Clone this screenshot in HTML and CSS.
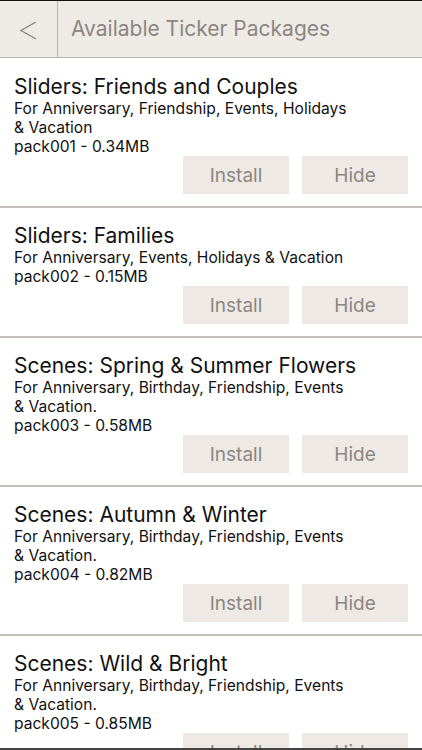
FILE: index.html
```html
<!DOCTYPE html>
<html>
<head>
<meta charset="utf-8">
<link rel="stylesheet" href="styles.css">
</head>
<body>
<div class="screen">
  <header class="nav">
    <div class="back">
      <svg width="20" height="22" viewBox="0 0 20 22"><polyline points="17,2 2,10.5 17,19" fill="none" stroke="#8b8681" stroke-width="1.4"/></svg>
    </div>
    <div class="nav-title">Available Ticker Packages</div>
  </header>
  <main class="list">
    <section class="item">
      <h2 class="title">Sliders: Friends and Couples</h2>
      <p class="desc">For Anniversary, Friendship, Events, Holidays<br>&amp; Vacation</p>
      <p class="desc">pack001 - 0.34MB</p>
      <div class="actions"><button class="btn">Install</button><button class="btn">Hide</button></div>
    </section>
    <section class="item">
      <h2 class="title">Sliders: Families</h2>
      <p class="desc">For Anniversary, Events, Holidays &amp; Vacation</p>
      <p class="desc">pack002 - 0.15MB</p>
      <div class="actions"><button class="btn">Install</button><button class="btn">Hide</button></div>
    </section>
    <section class="item">
      <h2 class="title">Scenes: Spring &amp; Summer Flowers</h2>
      <p class="desc">For Anniversary, Birthday, Friendship, Events<br>&amp; Vacation.</p>
      <p class="desc">pack003 - 0.58MB</p>
      <div class="actions"><button class="btn">Install</button><button class="btn">Hide</button></div>
    </section>
    <section class="item">
      <h2 class="title">Scenes: Autumn &amp; Winter</h2>
      <p class="desc">For Anniversary, Birthday, Friendship, Events<br>&amp; Vacation.</p>
      <p class="desc">pack004 - 0.82MB</p>
      <div class="actions"><button class="btn">Install</button><button class="btn">Hide</button></div>
    </section>
    <section class="item">
      <h2 class="title">Scenes: Wild &amp; Bright</h2>
      <p class="desc">For Anniversary, Birthday, Friendship, Events<br>&amp; Vacation.</p>
      <p class="desc">pack005 - 0.85MB</p>
      <div class="actions"><button class="btn">Install</button><button class="btn">Hide</button></div>
    </section>
  </main>
  <div class="bottom-bar"></div>
</div>
</body>
</html>
```
FILE: styles.css
```css
html, body {
  margin: 0;
  padding: 0;
  background: #ffffff;
}
.screen {
  width: 422px;
  height: 750px;
  display: flex;
  flex-direction: column;
  overflow: hidden;
  font-family: Inter, "Liberation Sans", Arial, sans-serif;
}
.nav {
  flex: none;
  height: 56px;
  display: flex;
  background: #eeeae6;
  border-top: 1px solid #111;
  border-bottom: 1px solid #b9b3ad;
}
.back {
  width: 58px;
  border-right: 1px solid #b9b3ad;
  display: flex;
  align-items: center;
  justify-content: center;
  padding: 3px 0 0 1px;
  box-sizing: border-box;
}
.nav-title {
  padding-left: 13px;
  display: flex;
  align-items: center;
  font-size: 21px;
  color: #8b8681;
  padding-bottom: 1px;
}
.list {
  flex: 1;
  overflow: hidden;
  padding-top: 1px;
}
.item {
  padding: 15px 14px 12px 14px;
  border-bottom: 2px solid #c4bfba;
}
.title {
  margin: 0;
  font-weight: normal;
  font-size: 21px;
  line-height: 25px;
  color: #111;
}
.desc {
  margin: 0;
  font-size: 15.6px;
  line-height: 19px;
  color: #111;
}
.actions {
  display: flex;
  justify-content: flex-end;
  gap: 13px;
  margin-top: 0;
}
.btn {
  width: 106px;
  height: 38px;
  border: none;
  background: #eee9e5;
  color: #8b8681;
  font-family: inherit;
  font-size: 19px;
  padding: 0;
}
.bottom-bar {
  flex: none;
  height: 2px;
  background: #444;
}
```
